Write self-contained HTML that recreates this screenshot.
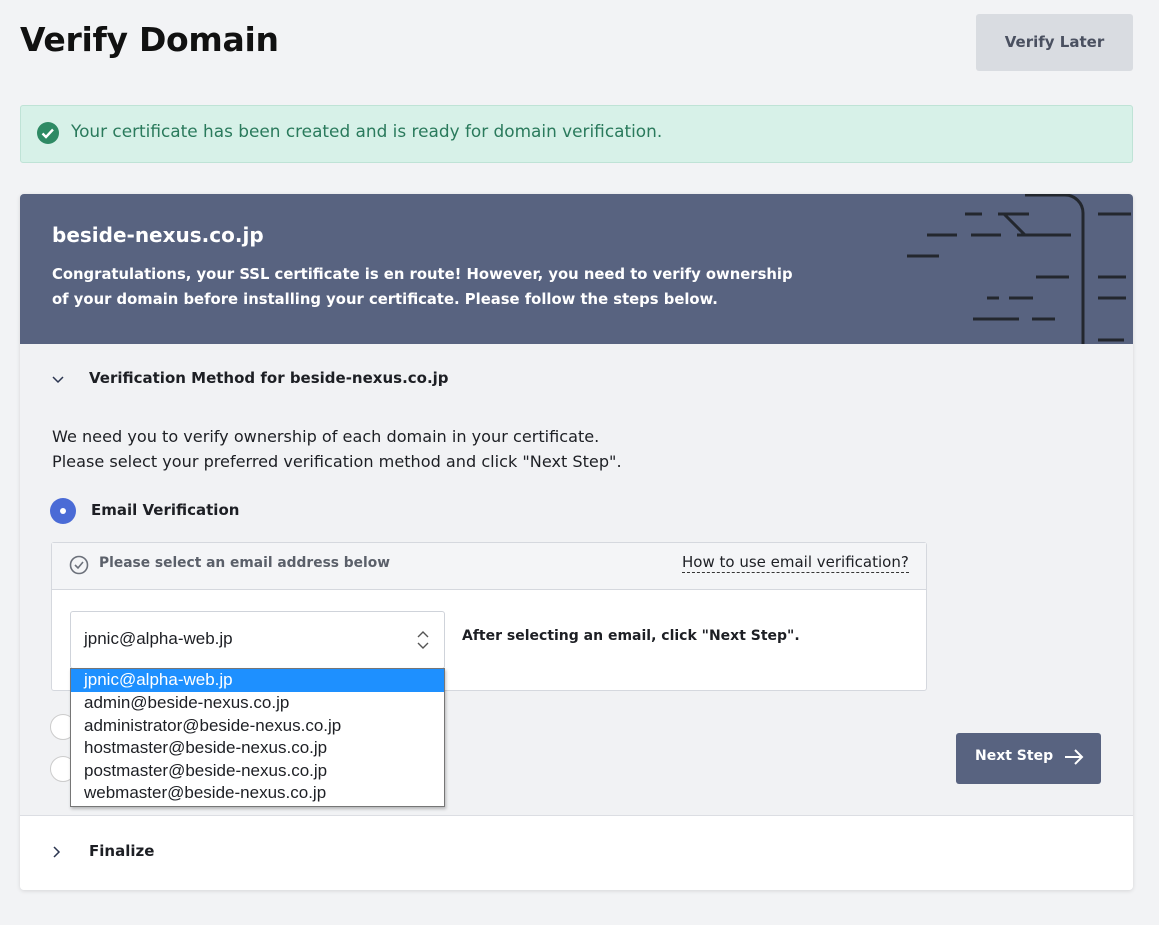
<!DOCTYPE html>
<html><head><meta charset="utf-8"><style>
*{box-sizing:border-box;margin:0;padding:0}
body{width:1159px;height:925px;background:#f2f3f5;font-family:"DejaVu Sans",sans-serif;color:#1d1f24;position:relative;overflow:hidden}
.a{position:absolute;white-space:nowrap}
</style></head><body>
<div class="a" style="left:20px;top:20px;font-size:33px;font-weight:600;color:#111;letter-spacing:-0.3px">Verify Domain</div>
<div class="a" style="left:976px;top:14px;width:157px;height:57px;background:#d9dce1;border-radius:3px;color:#4a5060;font-weight:bold;font-size:15px;line-height:57px;text-align:center">Verify Later</div>
<div class="a" style="left:20px;top:105px;width:1113px;height:58px;background:#d7f1e8;border:1px solid #bfe3d6;border-radius:3px"></div>
<svg class="a" style="left:36px;top:121px" width="24" height="24" viewBox="0 0 24 24"><circle cx="12" cy="12" r="11" fill="#2e8a64"/><path d="M6.5 12.5l3.5 3.5 7-7.5" stroke="#fff" stroke-width="2.4" fill="none"/></svg>
<div class="a" style="left:71px;top:121px;font-size:16.9px;color:#2a7a5c">Your certificate has been created and is ready for domain verification.</div>

<div class="a" style="left:20px;top:194px;width:1113px;height:696px;border-radius:4px;overflow:hidden;box-shadow:0 1px 4px rgba(0,0,0,.12);background:#f1f2f4">
 <div class="a" style="left:0;top:0;width:1113px;height:150px;background:#586380"></div>
 <svg class="a" style="left:860px;top:0" width="253" height="150" stroke="#23272e" stroke-width="3" fill="none">
  <path d="M85 20h17M118 20h31M124 20l21 21M47 41h30M91 41h30M137 41h54M27 62h32M156 83h33M107 104h12M129 104h24M93 125h46M152 125h23M218 20h33M218 83h28M218 104h28M218 146h26"/>
  <path d="M145 1h40a18 18 0 0 1 18 18v131"/>
 </svg>
 <div class="a" style="left:32px;top:29px;color:#fff;font-size:20px;font-weight:bold">beside-nexus.co.jp</div>
 <div class="a" style="left:32px;top:68px;color:#fff;font-size:14.8px;font-weight:bold;line-height:25px">Congratulations, your SSL certificate is en route! However, you need to verify ownership<br>of your domain before installing your certificate. Please follow the steps below.</div>
 <svg class="a" style="left:31px;top:181px" width="14" height="10"><path d="M2 2l5 5 5-5" stroke="#2b3550" stroke-width="1.5" fill="none"/></svg>
 <div class="a" style="left:69px;top:175px;font-size:15px;font-weight:bold;color:#1d1f24">Verification Method for beside-nexus.co.jp</div>
 <div class="a" style="left:32px;top:230px;font-size:16.1px;line-height:25px;color:#1d1f24">We need you to verify ownership of each domain in your certificate.<br>Please select your preferred verification method and click "Next Step".</div>
 <div class="a" style="left:30px;top:304px;width:26px;height:26px;border-radius:50%;background:#4a6bd6"></div>
 <div class="a" style="left:40px;top:314px;width:6px;height:6px;border-radius:50%;background:#fff"></div>
 <div class="a" style="left:71px;top:307px;font-size:15px;font-weight:bold">Email Verification</div>
 <div class="a" style="left:31px;top:348px;width:876px;height:149px;background:#fff;border:1px solid #d5d8de;border-radius:3px"></div>
 <div class="a" style="left:32px;top:349px;width:874px;height:47px;background:#f4f5f7;border-bottom:1px solid #d5d8de"></div>
 <svg class="a" style="left:49px;top:361px" width="20" height="20"><circle cx="10" cy="10" r="8.5" stroke="#6b707a" stroke-width="1.6" fill="none"/><path d="M6 10l3 3 5-6" stroke="#6b707a" stroke-width="1.6" fill="none"/></svg>
 <div class="a" style="left:79px;top:361px;font-size:13.8px;font-weight:bold;color:#5b606a">Please select an email address below</div>
 <div class="a" style="left:662px;top:358px;font-size:15px;color:#1d1f24;border-bottom:1px dashed #333;line-height:20px">How to use email verification?</div>
 <div class="a" style="left:50px;top:417px;width:375px;height:58px;background:#fff;border:1px solid #cfd3da;border-radius:3px;font-family:'Liberation Sans',sans-serif;font-size:17px;line-height:54px;padding-left:13px">jpnic@alpha-web.jp</div>
 <svg class="a" style="left:395px;top:435px" width="16" height="22"><path d="M3 8l5-5 5 5M3 14l5 5 5-5" stroke="#555" stroke-width="1.4" fill="none"/></svg>
 <div class="a" style="left:442px;top:434px;font-size:14px;font-weight:bold">After selecting an email, click "Next Step".</div>
 <div class="a" style="left:30px;top:520px;width:26px;height:26px;border-radius:50%;background:#fff;border:1px solid #ccc"></div>
 <div class="a" style="left:30px;top:562px;width:26px;height:26px;border-radius:50%;background:#fff;border:1px solid #ccc"></div>
 <div class="a" style="left:50px;top:474px;width:375px;height:139px;background:#fff;border:1px solid #767676;box-shadow:1px 2px 3px rgba(0,0,0,.25);font-family:'Liberation Sans',sans-serif;font-size:17px;line-height:22.5px">
  <div style="background:#1e90ff;color:#fff;padding-left:13px;height:23px">jpnic@alpha-web.jp</div>
  <div style="padding-left:13px">admin@beside-nexus.co.jp</div>
  <div style="padding-left:13px">administrator@beside-nexus.co.jp</div>
  <div style="padding-left:13px">hostmaster@beside-nexus.co.jp</div>
  <div style="padding-left:13px">postmaster@beside-nexus.co.jp</div>
  <div style="padding-left:13px">webmaster@beside-nexus.co.jp</div>
 </div>
 <div class="a" style="left:936px;top:539px;width:145px;height:51px;background:#586380;border-radius:3px;color:#fff;font-weight:bold;font-size:14px;line-height:46px;padding-left:19px">Next Step</div>
 <svg class="a" style="left:1043px;top:554px" width="22" height="18"><path d="M2 9h17M12 2l7 7-7 7" stroke="#fff" stroke-width="2" fill="none"/></svg>
 <div class="a" style="left:0;top:621px;width:1113px;height:75px;background:#fff;border-top:1px solid #dcdee3"></div>
 <svg class="a" style="left:32px;top:651px" width="10" height="14"><path d="M2 2l5 5-5 5" stroke="#2b3550" stroke-width="1.5" fill="none"/></svg>
 <div class="a" style="left:69px;top:648px;font-size:15px;font-weight:bold">Finalize</div>
</div>
</body></html>
